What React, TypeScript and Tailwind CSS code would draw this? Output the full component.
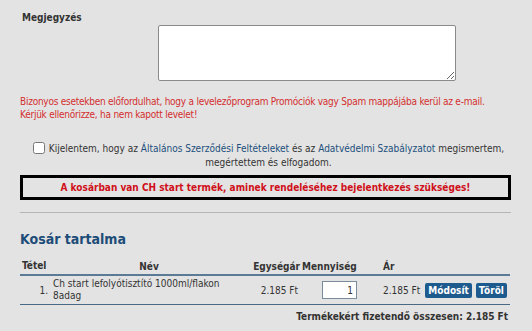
export default function App() {
  return (
    <div
      className="min-h-[331px] w-[532px] bg-[#e3e3e3] pl-5 pr-[21px] text-[10px] text-[#333]"
      style={{ fontFamily: '"DejaVu Sans Condensed", "DejaVu Sans", sans-serif' }}
    >
      {/* Megjegyzés */}
      <div className="pt-[11px]">
        <div className="pl-[2px] font-bold leading-[14px] text-[#333]">Megjegyzés</div>
        <div className="ml-[138px]">
          <textarea className="block h-[56px] w-[298px] resize rounded-[2px] border border-[#8a8a8a] bg-white" />
        </div>
      </div>

      <p className="mt-[14px] whitespace-nowrap leading-[13px] tracking-[-0.25px] text-[#d32f2f]">
        Bizonyos esetekben előfordulhat, hogy a levelezőprogram Promóciók vagy Spam mappájába kerül az e-mail.
        <br />
        Kérjük ellenőrizze, ha nem kapott levelet!
      </p>

      {/* ÁSZF */}
      <p className="mt-[21px] pl-[6px] text-center leading-[14px]">
        <input type="checkbox" className="mr-[4px] h-[12px] w-[12px] align-[-2px]" />
        Kijelentem, hogy az <span className="text-[#1c4f7c]">Általános Szerződési Feltételeket</span> és az{" "}
        <span className="text-[#1c4f7c]">Adatvédelmi Szabályzatot</span> megismertem, megértettem és elfogadom.
      </p>

      <div className="mt-[5px] border-[3px] border-black py-[3px] text-center text-[10px] font-bold leading-[13px] text-[#d0101a]">
        A kosárban van CH start termék, aminek rendeléséhez bejelentkezés szükséges!
      </div>

      <hr className="mt-[12px] border-t border-[#b5b5b5]" />

      {/* Kosár */}
      <h2 className="mt-[17px] text-[14px] font-bold leading-[18px] text-[#1d4c78]">Kosár tartalma</h2>

      <table className="mt-[10px] w-[490px] table-fixed border-collapse whitespace-nowrap">
        <colgroup>
          <col className="w-[32px]" />
          <col className="w-[194px]" />
          <col className="w-[54px]" />
          <col className="w-[60px]" />
          <col className="w-[150px]" />
        </colgroup>
        <thead>
          <tr className="border-b-2 border-[#5b7a96]">
            <th className="pl-[2px] text-left font-bold leading-[16px]">Tétel</th>
            <th className="text-center font-bold">Név</th>
            <th className="text-right font-bold">Egységár</th>
            <th className="pl-[2px] text-left font-bold">Mennyiség</th>
            <th className="pl-[23px] text-left font-bold">Ár</th>
          </tr>
        </thead>
        <tbody>
          <tr className="border-b border-[#4a6985]">
            <td className="pr-[4px] text-right align-middle">1.</td>
            <td className="py-[2px] pl-[1px] leading-[12px]">
              Ch start lefolyótisztító 1000ml/flakon
              <br />
              8adag
            </td>
            <td className="pr-[2px] text-right">2.185 Ft</td>
            <td className="pl-[22px]">
              <input
                type="text"
                defaultValue="1"
                className="block h-[18px] w-[35px] border border-[#7a8b9c] bg-white px-[3px] text-right text-[10px]"
              />
            </td>
            <td>
              <div className="flex items-center gap-[4px] pl-[23px]">
                <span className="mr-[1px]">2.185 Ft</span>
                <button className="rounded-[2px] bg-[#1d5a8e] px-[3px] text-[10px] font-bold leading-[15px] text-white">
                  Módosít
                </button>
                <button className="rounded-[2px] bg-[#1d5a8e] px-[3px] text-[10px] font-bold leading-[15px] text-white">
                  Töröl
                </button>
              </div>
            </td>
          </tr>
        </tbody>
      </table>

      <div className="pr-[3px] pt-[5px] text-right text-[10px] font-bold leading-[14px]">
        Termékekért fizetendő összesen: 2.185 Ft
      </div>
    </div>
  );
}
